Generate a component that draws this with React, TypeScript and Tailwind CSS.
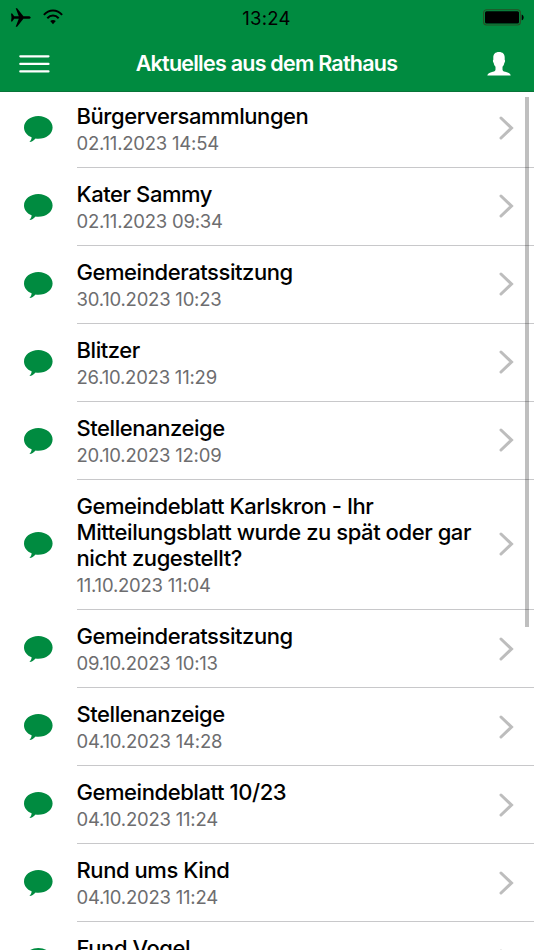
const items = [
  { title: 'Bürgerversammlungen', date: '02.11.2023 14:54' },
  { title: 'Kater Sammy', date: '02.11.2023 09:34' },
  { title: 'Gemeinderatssitzung', date: '30.10.2023 10:23' },
  { title: 'Blitzer', date: '26.10.2023 11:29' },
  { title: 'Stellenanzeige', date: '20.10.2023 12:09' },
  {
    title: 'Gemeindeblatt Karlskron - Ihr Mitteilungsblatt wurde zu spät oder gar nicht zugestellt?',
    date: '11.10.2023 11:04',
  },
  { title: 'Gemeinderatssitzung', date: '09.10.2023 10:13' },
  { title: 'Stellenanzeige', date: '04.10.2023 14:28' },
  { title: 'Gemeindeblatt 10/23', date: '04.10.2023 11:24' },
  { title: 'Rund ums Kind', date: '04.10.2023 11:24' },
  { title: 'Fund Vogel', date: '' },
];

function StatusBar() {
  return (
    <div className="grid h-9 grid-cols-3 items-center pr-2.5 pl-[11px] text-black">
      <div className="flex items-center gap-3 pb-0.5">
        <svg width="20" height="19" viewBox="0 0 20 19" fill="currentColor">
          <path d="M0 5.500h1.200l2 2.700h4.600L4.700.3h1.400l6.300 7.900h5.100c1.300 0 2.200.6 2.200 1.300s-.9 1.300-2.200 1.300h-5.100l-6.300 7.900H4.700l3.100-7.900H3.200l-2 2.700H0l.5-4z" />
        </svg>
        <svg width="20" height="16" viewBox="0 0 20 16" fill="none" stroke="currentColor" strokeWidth="2">
          <path d="M.9 5.800C6-.1 14-.1 19.100 5.800" />
          <path d="M4.300 9.200c3.300-3.500 8.100-3.500 11.400 0" />
          <path d="M10 15.200l-2.800-3.100c1.700-1.400 3.900-1.400 5.600 0z" fill="currentColor" stroke="none" />
        </svg>
      </div>
      <span className="pr-0.5 text-center text-[18.5px] leading-9 tracking-[0.3px]">13:24</span>
      <svg className="-mt-0.5 justify-self-end" width="41" height="17" viewBox="0 0 41 17">
        <rect x=".6" y=".8" width="36.8" height="15.200" rx="3" fill="none" stroke="#274f25" strokeWidth="1.1" />
        <rect x="2" y="2.300" width="34" height="12.200" rx="1.5" fill="#000" />
        <path d="M38.700 5.500c2.600.8 2.600 5 0 5.800z" fill="#000" />
      </svg>
    </div>
  );
}

function ChatBubble() {
  return (
    <svg className="ml-6 shrink-0" width="29" height="27" viewBox="0 0 29 27" fill="#008b40">
      <path d="M14.300 0C22.200 0 28.600 5 28.600 11.400S22.200 22.700 14.300 22.700c-.9 0-1.800-.1-2.700-.2-1.700 1.900-3.800 3.400-6.200 3.600 1.200-1.200 2.200-2.800 2.200-4.800C3 19.400 0 15.600 0 11.400 0 5 6.400 0 14.300 0z" />
    </svg>
  );
}

export default function App() {
  return (
    <div className="relative h-[950px] w-[534px] overflow-hidden bg-white font-['Inter',sans-serif]">
      <header className="relative z-10 h-[92px] border-b border-[#087438] bg-[#008b40]">
        <StatusBar />
        <div className="flex h-[55px] items-center justify-between pr-[23px] pl-[19px] text-white">
          <svg width="31" height="18" viewBox="0 0 31 18" stroke="currentColor" strokeWidth="2.2" strokeLinecap="round">
            <path d="M1.300 1.300h28.200M1.300 8.900h28.200M1.300 16.400h28.200" />
          </svg>
          <h1 className="pr-1 text-[21.5px] font-semibold tracking-[-0.76px]">Aktuelles aus dem Rathaus</h1>
          <svg width="24" height="24" viewBox="0 0 24 24" fill="currentColor">
            <path d="M12 0c3.800 0 5.700 2.200 5.700 5.500v2.200c.6.300.5 2.500-.4 3.400-.3 1.700-.9 2.900-1.800 3.700v2.600c0 1.200.9 1.800 2.700 2.400 3.500 1.100 5.100 1.700 5.500 3.700H.3c.4-2 2-2.600 5.500-3.700 1.800-.6 2.700-1.200 2.700-2.400v-2.600c-.9-.8-1.500-2-1.800-3.700-.9-.9-1-3.100-.4-3.400V5.500C6.300 2.200 8.200 0 12 0z" />
          </svg>
        </div>
      </header>

      <ul className="-mt-0.5">
        {items.map((item, i) => (
          <li key={i} className="flex items-center">
            <ChatBubble />
            <div className="ml-[23.5px] flex flex-1 items-center border-b border-[#c8c8ca] pt-[12.5px] pb-2.5">
              <div className="w-[410px]">
                <p className="text-[22px] leading-[26.2px] font-[470] tracking-[-0.43px] text-black">{item.title}</p>
                <p className="min-h-[28.3px] text-[18.5px] leading-[28.3px] tracking-[-0.22px] text-[#6d6d6f]">{item.date}</p>
              </div>
              <svg className="-mt-[3px] ml-3" width="15" height="24" viewBox="0 0 15 24" fill="none" stroke="#bdbdbd" strokeWidth="3" strokeLinecap="round">
                <path d="M2 2l10.500 10L2 22" />
              </svg>
            </div>
          </li>
        ))}
      </ul>

      {/* scroll indicator */}
      <div className="absolute top-[97px] right-[5px] h-[530px] w-1 bg-black/25" />
    </div>
  );
}
